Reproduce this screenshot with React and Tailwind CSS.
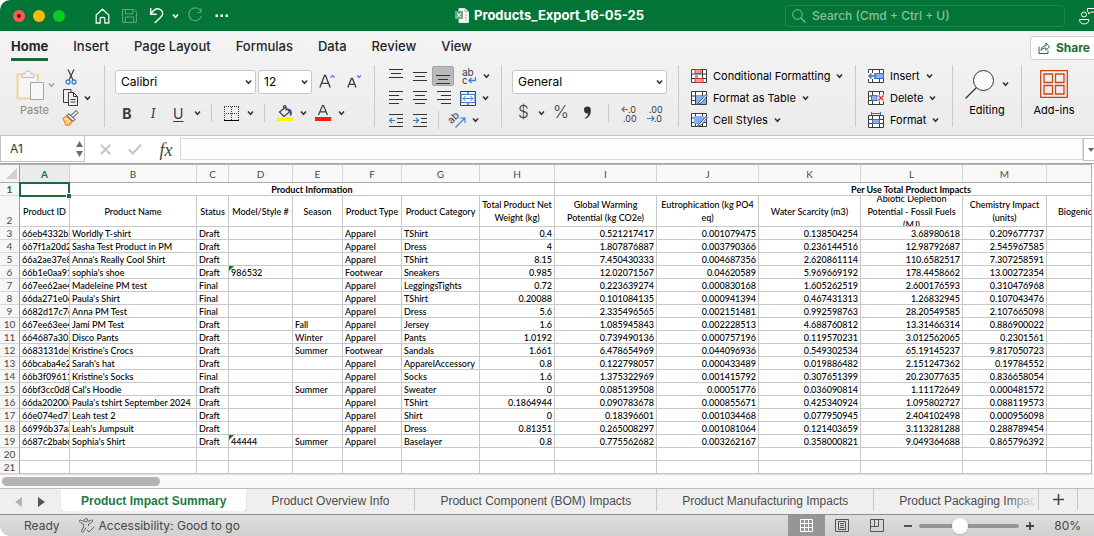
import React, { useState } from "react";
import clsx from "clsx";

const TABS = ["Home", "Insert", "Page Layout", "Formulas", "Data", "Review", "View"];

const COLUMNS = [
  { id: "A", width: "w-[50px]", label: "Product ID" },
  { id: "B", width: "w-[127px]", label: "Product Name" },
  { id: "C", width: "w-[32px]", label: "Status" },
  { id: "D", width: "w-[64px]", label: "Model/Style #" },
  { id: "E", width: "w-[50px]", label: "Season" },
  { id: "F", width: "w-[59px]", label: "Product Type" },
  { id: "G", width: "w-[78px]", label: "Product Category" },
  { id: "H", width: "w-[75px]", label: "Total Product Net Weight (kg)" },
  { id: "I", width: "w-[102px]", label: "Global Warming Potential (kg CO2e)" },
  { id: "J", width: "w-[102px]", label: "Eutrophication (kg PO4 eq)" },
  { id: "K", width: "w-[102px]", label: "Water Scarcity (m3)" },
  { id: "L", width: "w-[102px]", label: "Abiotic Depletion Potential - Fossil Fuels (MJ)" },
  { id: "M", width: "w-[84px]", label: "Chemistry Impact (units)" },
  { id: "", width: "w-[220px]", label: "Biogenic" },
];

const ROWS = [
  ["66eb4332b3", "Worldly T-shirt", "Draft", "", "", "Apparel", "TShirt", "0.4", "0.521217417", "0.001079475", "0.138504254", "3.68980618", "0.209677737"],
  ["667f1a20d2", "Sasha Test Product in PM", "Draft", "", "", "Apparel", "Dress", "4", "1.807876887", "0.003790366", "0.236144516", "12.98792687", "2.545967585"],
  ["66a2ae37e8", "Anna's Really Cool Shirt", "Draft", "", "", "Apparel", "TShirt", "8.15", "7.450430333", "0.004687356", "2.620861114", "110.6582517", "7.307258591"],
  ["66b1e0aa91", "sophia's shoe", "Draft", "986532", "", "Footwear", "Sneakers", "0.985", "12.02071567", "0.04620589", "5.969669192", "178.4458662", "13.00272354"],
  ["667ee62ae4", "Madeleine PM test", "Final", "", "", "Apparel", "LeggingsTights", "0.72", "0.223639274", "0.000830168", "1.605262519", "2.600176593", "0.310476968"],
  ["66da271e0c", "Paula's Shirt", "Final", "", "", "Apparel", "TShirt", "0.20088", "0.101084135", "0.000941394", "0.467431313", "1.26832945", "0.107043476"],
  ["6682d17c7c", "Anna PM Test", "Final", "", "", "Apparel", "Dress", "5.6", "2.335496565", "0.002151481", "0.992598763", "28.20549585", "2.107665098"],
  ["667ee63ee4", "Jami PM Test", "Draft", "", "Fall", "Apparel", "Jersey", "1.6", "1.085945843", "0.002228513", "4.688760812", "13.31466314", "0.886900022"],
  ["664687a305", "Disco Pants", "Draft", "", "Winter", "Apparel", "Pants", "1.0192", "0.739490136", "0.000757196", "0.119570231", "3.012562065", "0.2301561"],
  ["6683131deb", "Kristine's Crocs", "Draft", "", "Summer", "Footwear", "Sandals", "1.661", "6.478654969", "0.044096936", "0.549302534", "65.19145237", "9.817050723"],
  ["66bcaba4e2", "Sarah's hat", "Draft", "", "", "Apparel", "ApparelAccessory", "0.8", "0.122798057", "0.000433489", "0.019886482", "2.151247362", "0.19784552"],
  ["66b3f09611", "Kristine's Socks", "Final", "", "", "Apparel", "Socks", "1.6", "1.375322969", "0.001415792", "0.307651399", "20.23077635", "0.836658054"],
  ["66bf3cc0d8", "Cal's Hoodie", "Draft", "", "Summer", "Apparel", "Sweater", "0", "0.085139508", "0.00051776", "0.036090814", "1.11172649", "0.000481572"],
  ["66da20200c", "Paula's tshirt September 2024", "Draft", "", "", "Apparel", "TShirt", "0.1864944", "0.090783678", "0.000855671", "0.425340924", "1.095802727", "0.088119573"],
  ["66e074ed75", "Leah test 2", "Draft", "", "", "Apparel", "Shirt", "0", "0.18396601", "0.001034468", "0.077950945", "2.404102498", "0.000956098"],
  ["66996b37aa", "Leah's Jumpsuit", "Draft", "", "", "Apparel", "Dress", "0.81351", "0.265008297", "0.001081064", "0.121403659", "3.113281288", "0.288789454"],
  ["6687c2bab6", "Sophia's Shirt", "Draft", "44444", "Summer", "Apparel", "Baselayer", "0.8", "0.775562682", "0.003262167", "0.358000821", "9.049364688", "0.865796392"],
  [],
  [],
];

const SHEETS = [
  "Product Impact Summary",
  "Product Overview Info",
  "Product Component (BOM) Impacts",
  "Product Manufacturing Impacts",
  "Product Packaging Impacts",
];

function Icon({ w = 16, h = 16, children, className }) {
  return (
    <svg width={w} height={h} viewBox={`0 0 ${w} ${h}`} fill="none" stroke="#3b3b3b" strokeWidth="1" className={clsx("shrink-0 overflow-visible", className)} aria-hidden="true">
      {children}
    </svg>
  );
}

function Chevron({ className, stroke = "#333" }) {
  return (
    <Icon w={7} h={6} className={className}>
      <path d="M1 1.5 3.5 4.2 6 1.5" stroke={stroke} strokeWidth="1.6" />
    </Icon>
  );
}

function IconButton({ label, className, children }) {
  return (
    <button type="button" aria-label={label} className={clsx("flex shrink-0 items-center justify-center", className)}>
      {children}
    </button>
  );
}

function Separator({ className = "h-[62px]" }) {
  return <span className={clsx("w-px shrink-0 bg-[#c9c9c9]", className)} />;
}

function RibbonSelect({ label, value, className }) {
  return (
    <div className={clsx("relative flex items-center", className)}>
      <select aria-label={label} defaultValue={value} className="h-6 w-full appearance-none rounded-[3px] border border-[#c8c8c8] bg-white pl-[5px] text-[12px] text-black">
        <option>{value}</option>
      </select>
      <Chevron className="pointer-events-none absolute right-1" />
    </div>
  );
}

function TitleBar() {
  return (
    <header className="flex h-[31px] shrink-0 items-center bg-[#037536] text-white">
      <div className="flex items-center gap-2 pl-[13px]">
        <IconButton label="Close" className="h-3 w-3 rounded-full bg-[#fb5b50]">
          <span className="h-1 w-1 rounded-full bg-[#6d0a05]" />
        </IconButton>
        <IconButton label="Minimize" className="h-3 w-3 rounded-full bg-[#f8bc05]" />
        <IconButton label="Zoom window" className="h-3 w-3 rounded-full bg-[#0acb21]" />
      </div>
      <div className="ml-[30px] flex items-center gap-3">
        <IconButton label="Home">
          <Icon w={15} h={16}>
            <path d="M1.2 7 7.5 1.2 13.8 7v8H9.8v-4.5a1 1 0 0 0-1-1H6.2a1 1 0 0 0-1 1V15h-4z" stroke="#e9f4ed" strokeWidth="1.3" />
          </Icon>
        </IconButton>
        <IconButton label="Save">
          <Icon w={15} h={16}>
            <path d="M.6 1.5h11.3l2.5 2.5v10.4H.6zM3.5 1.5v4.3h7.4V1.5M3.3 14.4V9h8.4v5.4" stroke="#62a983" />
          </Icon>
        </IconButton>
        <div className="flex items-center gap-2">
          <IconButton label="Undo">
            <Icon w={15} h={17}>
              <path d="M1.7 1v6.2h6M1.9 7C4 3.6 7.5.8 11 2.300c3.500 1.800 3.300 5.400 1 7.700L5.800 16" stroke="#fff" strokeWidth="1.4" />
            </Icon>
          </IconButton>
          <IconButton label="Undo history"><Chevron stroke="#fff" /></IconButton>
        </div>
        <IconButton label="Redo" className="-ml-1">
          <Icon w={16} h={16}>
            <path d="M14 3.5A6.4 6.4 0 1 0 14.400 8M14 .5v4h-4" stroke="#57a37a" strokeWidth="1.2" />
          </Icon>
        </IconButton>
        <IconButton label="More commands">
          <Icon w={13} h={4}>
            <path d="M.5.500H3V3H.5zM5.500.5H8V3H5.500zM10.500.5H13V3h-2.500z" fill="#fff" stroke="none" />
          </Icon>
        </IconButton>
      </div>
      <div className="ml-[227px] flex flex-1 items-center gap-[5px]">
        <Icon w={14} h={15}>
          <path d="M4 .5h6L13.500 4v10.500H4z" fill="#fff" stroke="#d9eadf" />
          <path d="M10 .5V4h3.500M10 7h2M10 9.500h2M10 12h2" stroke="#8bb99d" />
          <path d="M0 3h8v8H0z" fill="#6ba583" stroke="none" />
          <path d="m2 5 4 4.500M6 5 2 9.500" stroke="#fff" />
        </Icon>
        <h1 className="whitespace-nowrap text-[13px] font-bold">Products_Export_16-05-25</h1>
      </div>
      <label className="flex h-[22px] w-[280px] items-center gap-[6px] rounded-[4px] border border-[#218653] px-[6px]">
        <Icon w={14} h={14}>
          <circle cx="5.500" cy="5.500" r="4.800" stroke="#8ac0a0" />
          <path d="m9 9 4.500 4.500" stroke="#8ac0a0" strokeWidth="1.300" />
        </Icon>
        <input aria-label="Search" placeholder="Search (Cmd + Ctrl + U)" className="w-full bg-transparent text-[12px] font-medium text-white outline-none placeholder:text-[#8ac0a0]" />
      </label>
      <IconButton label="Collaborators" className="ml-[14px]">
        <Icon w={15} h={18}>
          <circle cx="5" cy="7.500" r="2.500" stroke="#fff" />
          <path d="M.6 12.500h9.300c.3 2.500-1.700 4.500-4.600 4.500S.3 15 .6 12.500zM8.500 4.500v-3H15M8.500 4.500l1 .8.300 1.700 2-2H15" stroke="#fff" />
        </Icon>
      </IconButton>
    </header>
  );
}

function RibbonTabs({ active, onSelect }) {
  return (
    <nav className="flex h-[33px] items-center">
      <div className="flex flex-1 gap-[25px] pl-[11px]">
        {TABS.map((tab) => (
          <button
            key={tab}
            type="button"
            onClick={() => onSelect(tab)}
            className={clsx(
              "border-b-[3px] pt-[2px] pb-[3px] text-[13px] leading-[18px] whitespace-nowrap text-[#262626]",
              tab === active ? "border-[#18683a] font-bold" : "border-transparent font-medium"
            )}
          >
            {tab}
          </button>
        ))}
      </div>
      <button type="button" className="flex h-6 items-center gap-[6px] rounded-l-[4px] border border-r-0 border-[#cfcfcf] bg-white pr-1 pl-[7px] text-[12px] font-bold text-[#1c6b3c]">
        <Icon w={12} h={12}>
          <path d="M1 4.500v7h9V8.500M3 8.500c.3-3 2-4.800 5-4.800V1l3.500 3.800L8 8.300V6c-2.500 0-4 .7-5 2.500z" stroke="#1c6b3c" />
        </Icon>
        Share
      </button>
    </nav>
  );
}

function ClipboardGroup() {
  return (
    <div className="flex w-[104px] shrink-0 pl-4">
      <div className="flex w-[46px] flex-col items-start pt-[5px]">
        <div className="flex items-center gap-1">
          <Icon w={28} h={30}>
            <path d="M7 4.500H1.500v24H14M20 4.500h2V11" stroke="#efd49d" strokeWidth="2" />
            <path d="M3 6h17v21H3z" fill="#f7f5f1" stroke="none" />
            <path d="M6 7.500V4h3c.5-4 5.500-4 6 0h3v3.500z" fill="#f4f4f4" stroke="#b9b9b9" />
            <path d="M14.500 12.500h13v17h-13z" fill="#f7f7f7" stroke="#a5a5a5" />
          </Icon>
          <Chevron stroke="#a9a9a9" />
        </div>
        <button type="button" className="ml-1 pt-[2px] text-[11px] leading-4 text-[#858585]">Paste</button>
      </div>
      <div className="flex flex-col items-start gap-1 pt-[3px]">
        <IconButton label="Cut" className="h-[17px] w-[18px]">
          <Icon w={12} h={16}>
            <path d="M3 .5 8 11M9 .5 4 11" strokeWidth="1.200" />
            <circle cx="3" cy="13" r="2" stroke="#3f7fd0" strokeWidth="1.300" />
            <circle cx="9" cy="13" r="2" stroke="#3f7fd0" strokeWidth="1.300" />
          </Icon>
        </IconButton>
        <div className="flex items-center gap-[5px]">
          <IconButton label="Copy">
            <Icon w={17} h={17}>
              <path d="M9 3.500V.5H1.500v13H6M6.500 3.500h5l4 4v9h-9zM11.500 3.500v4h4M8.500 10.500h5M8.500 13h5" />
            </Icon>
          </IconButton>
          <Chevron />
        </div>
        <IconButton label="Format painter">
          <Icon w={17} h={16}>
            <path d="m1 8.500 3.500-2.300 5.500 5.300L7.500 15H4z" fill="#fbe0bd" stroke="#ec8f2f" strokeWidth="1.300" />
            <path d="m3 12 2-2M5 14l2-2" stroke="#ec8f2f" />
            <path d="m5 5.500 2-1.700 6 5.700-2 2zM9 5.500l5-5 2 2-5 5" fill="#eee" />
          </Icon>
        </IconButton>
      </div>
    </div>
  );
}

function FontGroup() {
  return (
    <div className="flex w-[269px] shrink-0 flex-col gap-2 pt-[5px] pl-[10px]">
      <div className="flex items-center gap-[2px]">
        <RibbonSelect label="Font" value="Calibri" className="w-[141px]" />
        <RibbonSelect label="Font size" value="12" className="w-[54px]" />
        <IconButton label="Increase font size" className="ml-[5px]">
          <Icon w={16} h={16}>
            <path d="M.8 13.500 5.500 1.500h1l4.700 12M2.400 9.300h7.200" strokeWidth="1.300" />
            <path d="m11.500 3.500 2-2 2 2" stroke="#3f7fd0" strokeWidth="1.200" />
          </Icon>
        </IconButton>
        <IconButton label="Decrease font size" className="ml-[10px]">
          <Icon w={16} h={16}>
            <path d="m.8 13.500 3.600-9h1l3.600 9M2 10.300h5.800" strokeWidth="1.300" />
            <path d="m10 1.500 2 2 2-2" stroke="#3f7fd0" strokeWidth="1.200" />
          </Icon>
        </IconButton>
      </div>
      <div className="flex h-[22px] items-center pl-[7px] text-[14px] text-[#3b3b3b]">
        <button type="button" className="w-[10px] font-bold">B</button>
        <button type="button" className="ml-4 w-[10px] font-serif italic">I</button>
        <button type="button" className="ml-[15px] w-[10px] underline underline-offset-2">U</button>
        <Chevron className="ml-[11px]" />
        <Separator className="ml-[10px] h-[18px]" />
        <IconButton label="Borders" className="ml-3">
          <Icon w={15} h={15}>
            <path d="M0 .5h15M.5 1v13M14.500 1v13M7.500 1v13M0 7.500h15" strokeDasharray="1 1" />
            <path d="M0 14.500h15" stroke="#000" />
          </Icon>
        </IconButton>
        <Chevron className="ml-2" />
        <Separator className="ml-[10px] h-[18px]" />
        <IconButton label="Fill color" className="ml-3">
          <Icon w={16} h={16}>
            <path d="m2.500 7 6-5 4 5-5.500 4.500zM6.500 4.500V2c0-2 2.500-2 2.500 0v3.500" strokeWidth="1.200" />
            <path d="M11 4.500c3 0 3.500 3 2.500 6" stroke="#3a4fa0" strokeWidth="2" />
            <path d="M0 12h16v4H0z" fill="#f7fb00" stroke="none" />
          </Icon>
        </IconButton>
        <Chevron className="ml-[7px]" />
        <IconButton label="Font color" className="ml-2">
          <Icon w={16} h={16}>
            <path d="M3.500 10 7.500.5h1l4 9.500M5 6.800h6" strokeWidth="1.200" />
            <path d="M0 12h16v4H0z" fill="#f8210b" stroke="none" />
          </Icon>
        </IconButton>
        <Chevron className="ml-[7px]" />
      </div>
    </div>
  );
}

function AlignIcon({ d }) {
  return (
    <Icon w={14} h={14}>
      <path d={d} stroke="#333" />
    </Icon>
  );
}

function AlignmentGroup() {
  return (
    <div className="flex w-[126px] shrink-0 flex-col gap-[2px] pt-px pl-[9px]">
      <div className="flex h-5 items-center">
        <IconButton label="Top align" className="w-6"><AlignIcon d="M0 .5h14M2 4.500h10M0 8.500h14" /></IconButton>
        <IconButton label="Middle align" className="w-6"><AlignIcon d="M0 3.500h14M2 7.500h10M0 11.500h14" /></IconButton>
        <IconButton label="Bottom align" className="h-5 w-[22px] rounded-[2px] border border-[#a5a5a5] bg-[#bababa]"><AlignIcon d="M0 6.500h14M2 10.500h10M0 14.500h14" /></IconButton>
        <IconButton label="Wrap text" className="ml-2">
          <Icon w={15} h={17}>
            <text x="0" y="8" fontSize="10" fill="#3b3b3b" stroke="none">ab</text>
            <text x="0" y="16" fontSize="10" fill="#3b3b3b" stroke="none">c</text>
            <path d="M13.500 9v3.500H7.500M9.500 10l-2.500 2.500 2.500 2.500" stroke="#3f7fd0" strokeWidth="1.300" />
          </Icon>
        </IconButton>
        <Chevron className="ml-[6px]" />
      </div>
      <div className="flex h-5 items-center">
        <IconButton label="Align left" className="w-6"><AlignIcon d="M0 .5h14M0 4.500h10M0 8.500h14M0 12.500h10" /></IconButton>
        <IconButton label="Center" className="w-6"><AlignIcon d="M0 .5h14M2 4.500h10M0 8.500h14M2 12.500h10" /></IconButton>
        <IconButton label="Align right" className="w-6"><AlignIcon d="M0 .5h14M4 4.500h10M0 8.500h14M4 12.500h10" /></IconButton>
        <IconButton label="Merge cells" className="ml-1">
          <Icon w={16} h={15}>
            <path d="M.5.500h15v14H.5zM8 .5v3M8 11v3.500" />
            <path d="M1 3.500h14v8H1z" fill="#fff" stroke="#3f7fd0" strokeWidth="1.200" />
            <path d="M3 7.500h10M5.500 5 3 7.500 5.500 10M10.500 5 13 7.500 10.500 10" stroke="#3f7fd0" />
          </Icon>
        </IconButton>
        <Chevron className="ml-[6px]" />
      </div>
      <div className="flex h-5 items-center">
        <IconButton label="Decrease indent" className="w-6">
          <Icon w={14} h={14}>
            <path d="M0 1.500h14M8 5.500h6M8 9.500h6M0 13.500h14" stroke="#333" />
            <path d="M6 7.500H0M3 5 .5 7.500 3 10" stroke="#3f7fd0" strokeWidth="1.200" />
          </Icon>
        </IconButton>
        <IconButton label="Increase indent" className="w-6">
          <Icon w={14} h={14}>
            <path d="M0 1.500h14M8 5.500h6M8 9.500h6M0 13.500h14" stroke="#333" />
            <path d="M0 7.500h6M3 5l2.500 2.500L3 10" stroke="#3f7fd0" strokeWidth="1.200" />
          </Icon>
        </IconButton>
        <Separator className="ml-[6px] h-[18px]" />
        <IconButton label="Orientation" className="ml-[10px]">
          <Icon w={18} h={16}>
            <text x="0" y="10" fontSize="10" fill="#3b3b3b" stroke="none" transform="rotate(-45 4 8)">ab</text>
            <path d="m6.500 15.500 9-9M11 6h5v5" stroke="#3f7fd0" strokeWidth="1.200" />
          </Icon>
        </IconButton>
        <Chevron className="ml-[5px]" />
      </div>
    </div>
  );
}

function NumberGroup() {
  return (
    <div className="flex w-[176px] shrink-0 flex-col gap-2 pt-[5px] pl-[10px]">
      <RibbonSelect label="Number format" value="General" className="w-[155px]" />
      <div className="flex h-[22px] items-center pl-[6px] text-[17px] text-[#3b3b3b]">
        <button type="button" aria-label="Currency" className="w-[10px] font-light">$</button>
        <Chevron className="ml-[10px]" />
        <button type="button" aria-label="Percent" className="ml-2 w-4 font-light">%</button>
        <IconButton label="Comma style" className="ml-[14px]">
          <Icon w={9} h={14}>
            <path d="M1 4a3.300 3.300 0 0 1 6.800 0C8 8 6 11.500 2.200 12.800l-.5-.8C4 10.800 5 9.300 5 7.300 3 8 1 6.500 1 4z" fill="#333" stroke="none" />
          </Icon>
        </IconButton>
        <Separator className="ml-4 h-[18px]" />
        <IconButton label="Increase decimal" className="ml-3">
          <Icon w={17} h={17}>
            <path d="M7 4.500H1M3.500 2 1 4.500 3.500 7" stroke="#3f7fd0" strokeWidth="1.200" />
            <text x="7" y="8" fontSize="9" fill="#3b3b3b" stroke="none">.0</text>
            <text x="2" y="17" fontSize="9" fill="#3b3b3b" stroke="none">.00</text>
          </Icon>
        </IconButton>
        <IconButton label="Decrease decimal" className="ml-[9px]">
          <Icon w={17} h={17}>
            <text x="2" y="8" fontSize="9" fill="#3b3b3b" stroke="none">.00</text>
            <text x="7" y="17" fontSize="9" fill="#3b3b3b" stroke="none">.0</text>
            <path d="M0 13.500h7M4.500 11 7 13.500 4.500 16" stroke="#3f7fd0" strokeWidth="1.200" />
          </Icon>
        </IconButton>
      </div>
    </div>
  );
}

function MenuButton({ icon, children }) {
  return (
    <button type="button" className="flex h-[22px] items-center gap-[6px] text-[11px] whitespace-nowrap text-black">
      {icon}
      {children}
      <Chevron />
    </button>
  );
}

const GRID = "M.5.500h15v13H.5zM.5 5h15M.5 9.500h15M4.500.5v13M11.500.5v13";

function StylesGroup() {
  return (
    <div className="flex w-[176px] shrink-0 flex-col pl-3">
      <MenuButton icon={
        <Icon w={16} h={14}>
          <path d={GRID} fill="#fff" />
          <path d="M4 .5h6v4H4zM4 9.500h8v4H4z" fill="#f59a94" stroke="#d7342a" />
          <path d="M4 5h3v4H4z" fill="#7ea9e6" stroke="none" />
        </Icon>
      }>Conditional Formatting</MenuButton>
      <MenuButton icon={
        <Icon w={16} h={14}>
          <path d={GRID} fill="#fff" />
          <path d="M5 5h10v8H5z" fill="#86b0ec" stroke="none" />
          <path d="M15.500 3 9 10l-3 3.500 4-1.500 6-7z" fill="#fff" stroke="#345a8f" />
        </Icon>
      }>Format as Table</MenuButton>
      <MenuButton icon={
        <Icon w={16} h={14}>
          <path d={GRID} fill="#fff" />
          <path d="M3 3h10v8H3z" fill="#86b0ec" stroke="none" />
          <path d="M15.500 3 9 10l-3 3.500 4-1.500 6-7z" fill="#fff" stroke="#345a8f" />
        </Icon>
      }>Cell Styles</MenuButton>
    </div>
  );
}

function CellsGroup() {
  return (
    <div className="flex w-[96px] shrink-0 flex-col pl-3">
      <MenuButton icon={
        <Icon w={16} h={14}>
          <path d={GRID} fill="#fff" />
          <path d="M7 4.500h8.500v5H7z" fill="#86b0ec" stroke="#3b6fc0" />
          <path d="M0 4h6v6H0z" fill="#f2f2f2" stroke="none" />
          <path d="M8 7H1M3.500 4.500 1 7l2.500 2.500" stroke="#2f6fd0" strokeWidth="1.300" />
        </Icon>
      }>Insert</MenuButton>
      <MenuButton icon={
        <Icon w={16} h={14}>
          <path d={GRID} fill="#fff" />
          <path d="M3.500 4.500H9v5H3.500z" fill="#86b0ec" stroke="#3b6fc0" />
          <path d="M9.500 3.500H17v7H9.500z" fill="#f0f0f0" stroke="none" />
          <path d="m10.500 4.500 5 5M15.500 4.500l-5 5" stroke="#e0392e" strokeWidth="1.400" />
        </Icon>
      }>Delete</MenuButton>
      <MenuButton icon={
        <Icon w={16} h={16}>
          <path d="M.5 3.500h15v12H.5zM.5 7.500h15M.5 11.500h15M4.500 3.500v12M11.500 3.500v12" fill="#fff" />
          <path d="M4.500 7.500h7v4h-7z" fill="#86b0ec" stroke="#3b6fc0" />
          <path d="M3.500 0v3M12.500 0v3M3.500 1.500h9" stroke="#2f6fd0" />
        </Icon>
      }>Format</MenuButton>
    </div>
  );
}

function Ribbon() {
  const [active, setActive] = useState("Home");
  return (
    <section className="shrink-0 border-b border-[#c3c3c3] bg-gradient-to-b from-[#f4f4f4] to-[#ebebeb] pb-1">
      <RibbonTabs active={active} onSelect={setActive} />
      <div className="flex items-start pt-px">
        <ClipboardGroup />
        <Separator />
        <FontGroup />
        <Separator />
        <AlignmentGroup />
        <Separator />
        <NumberGroup />
        <Separator />
        <StylesGroup />
        <Separator />
        <CellsGroup />
        <Separator />
        <button type="button" className="flex w-[68px] shrink-0 flex-col items-center pt-[3px] text-[11px] leading-4 text-black">
          <span className="flex items-center gap-[6px]">
            <Icon w={31} h={32}>
              <circle cx="18.500" cy="12.500" r="10" fill="#fafafa" stroke="#333" />
              <path d="M11.500 19.500.500 30.500" stroke="#333" strokeWidth="1.300" />
            </Icon>
            <Chevron />
          </span>
          <span className="pt-[2px]">Editing</span>
        </button>
        <Separator />
        <button type="button" className="flex w-[64px] shrink-0 flex-col items-center gap-1 pt-[5px] text-[11px] leading-4 text-black">
          <Icon w={28} h={28}>
            <path d="M.7.7h26.600v26.600H.7zM4 4h8.500v8.500H4zM15.500 4H24v8.500h-8.500zM4 15.500h8.500V24H4zM15.500 15.500H24V24h-8.500z" stroke="#cc4515" strokeWidth="1.300" />
          </Icon>
          Add-ins
        </button>
      </div>
    </section>
  );
}

function FormulaBar() {
  return (
    <section className="flex h-7 shrink-0 border-b border-[#a5a5a5] bg-white">
      <div className="flex h-[26px] w-[85px] shrink-0 items-center justify-between border border-[#c3c3c3] border-t-0 pr-px">
        <input aria-label="Name box" defaultValue="A1" className="w-[60px] bg-transparent pl-[9px] text-[12px] text-[#333] outline-none" />
        <Icon w={7} h={16}>
          <path d="M3.500 0 7 6H0zM3.500 16 7 10H0z" fill="#6e6e6e" stroke="none" />
        </Icon>
      </div>
      <div className="flex shrink-0 items-center pl-[15px]">
        <IconButton label="Cancel">
          <Icon w={11} h={11}><path d="m.8.8 9.400 9.400M10.200.8.800 10.200" stroke="#c6c6c6" strokeWidth="2" /></Icon>
        </IconButton>
        <IconButton label="Enter" className="ml-[17px]">
          <Icon w={14} h={11}><path d="m.8 5.500 4 4L13 .8" stroke="#c6c6c6" strokeWidth="2" /></Icon>
        </IconButton>
        <button type="button" aria-label="Insert function" className="ml-[14px] w-5 font-['Liberation_Serif',serif] text-[18px] leading-5 text-[#444] italic">fx</button>
      </div>
      <input aria-label="Formula" className="my-[2px] ml-1 h-[22px] min-w-0 flex-1 border border-[#d9d9d9] bg-[#fdfdfd] px-1 text-[12px] outline-none" />
      <IconButton label="Expand formula bar" className="my-[2px] w-[11px] border border-r-0 border-[#c3c3c3] pl-1">
        <Icon w={6} h={4}><path d="M0 0h6L3 4z" fill="#666" stroke="none" /></Icon>
      </IconButton>
    </section>
  );
}

function DataRow({ row, number }) {
  return (
    <tr className="h-[13px]">
      <RowHeader number={number} />
      {COLUMNS.map((col, i) => (
        <td
          key={i}
          className={clsx(
            "relative overflow-hidden border-r border-b border-[#c8c8c8] pt-[2px] leading-[10px] whitespace-nowrap",
            i >= 7 ? "pr-[2px] text-right" : "pl-[2px]"
          )}
        >
          {i === 3 && row[i] && <span className="absolute top-0 left-0 border-t-[5px] border-r-[5px] border-t-[#0d8016] border-r-transparent" />}
          {row[i]}
        </td>
      ))}
    </tr>
  );
}

function RowHeader({ number, selected }) {
  return (
    <th
      scope="row"
      className={clsx(
        "border-r border-b border-r-[#9c9c9c] border-b-[#d6d6d6] bg-[#f6f6f6] text-center align-bottom text-[10px] leading-3",
        selected ? "font-bold text-[#1f6f3f]" : "font-normal text-[#4a4a4a]"
      )}
    >
      {number}
    </th>
  );
}

function Sheet() {
  return (
    <main className="mr-[2px] overflow-hidden border-t border-r border-[#b3b3b3] bg-white">
      <table className="w-[1267px] table-fixed border-separate border-spacing-0 font-['Lato',sans-serif] text-[9px] font-medium text-black">
        <colgroup>
          <col className="w-5" />
          {COLUMNS.map((col, i) => <col key={i} className={col.width} />)}
        </colgroup>
        <thead>
          <tr className="h-[18px]">
            <td className="border-r border-b border-r-[#9c9c9c] border-b-[#ababab] bg-[#f6f6f6] pl-[6px]">
              <Icon w={11} h={11}><path d="M11 0v11H0z" fill="#d0d0d0" stroke="none" /></Icon>
            </td>
            {COLUMNS.map((col, i) => (
              <th
                key={i}
                scope="col"
                className={clsx(
                  "border-r border-b border-r-[#d3d3d3] border-b-[#ababab] text-[10px] leading-4",
                  i === 0 ? "bg-[#ebebeb] font-bold text-[#1f6f3f]" : "bg-[#f8f8f8] font-normal text-[#4a4a4a]"
                )}
              >
                {col.id}
              </th>
            ))}
          </tr>
        </thead>
        <tbody>
          <tr className="h-[13px]">
            <RowHeader number={1} selected />
            <td className="relative border-r border-b border-[#c8c8c8]">
              <span className="absolute -inset-x-px -top-px -bottom-[2px] border-2 border-[#1c6b3a]" />
              <span className="absolute -right-[2px] -bottom-[3px] h-[5px] w-[5px] border-t border-l border-white bg-[#1c6b3a]" />
            </td>
            <td colSpan={7} className="border-r border-b border-[#c8c8c8] pt-[2px] text-center leading-[10px] font-bold">Product Information</td>
            <td colSpan={6} className="border-b border-[#c8c8c8] pt-[2px] text-center leading-[10px] font-bold">Per Use Total Product Impacts</td>
          </tr>
          <tr className="h-[31px]">
            <RowHeader number={2} />
            {COLUMNS.map((col, i) => (
              <td key={i} className={clsx("border-r border-b border-[#c8c8c8] p-0", i === 13 ? "pl-[11px]" : "text-center")}>
                <div className="flex h-[30px] flex-col justify-center overflow-hidden leading-[13px]">
                  <span className={i === 11 ? "px-[2px]" : "px-0"}>{col.label}</span>
                </div>
              </td>
            ))}
          </tr>
          {ROWS.map((row, i) => <DataRow key={i} row={row} number={i + 3} />)}
        </tbody>
      </table>
    </main>
  );
}

function SheetTabs() {
  const [active, setActive] = useState(SHEETS[0]);
  return (
    <nav className="flex h-[27px] shrink-0 items-start border-t border-b border-t-[#bdbdbd] border-b-[#8f8f8f] bg-[#efefef] font-['Liberation_Sans',sans-serif] text-[12px] text-[#4c4c4c]">
      <div className="flex h-[25px] w-[61px] shrink-0 items-center gap-4 pl-[15px]">
        <IconButton label="Previous sheet"><Icon w={7} h={10}><path d="M7 0v10L0 5z" fill="#b3b3b3" stroke="none" /></Icon></IconButton>
        <IconButton label="Next sheet"><Icon w={7} h={10}><path d="M0 0v10l7-5z" fill="#555" stroke="none" /></Icon></IconButton>
      </div>
      <div className="flex min-w-0 flex-1 overflow-hidden">
        {SHEETS.map((name) => (
          <button
            key={name}
            type="button"
            onClick={() => setActive(name)}
            className={clsx(
              "h-[22px] shrink-0 pt-px whitespace-nowrap",
              name === active ? "rounded-b-[2px] bg-white px-5 font-bold text-[#217a43] shadow-[0_1px_1px_#999]" : "border-r border-[#c6c6c6] px-[25px]"
            )}
          >
            {name}
          </button>
        ))}
      </div>
      <div className="z-10 -ml-8 h-[22px] w-8 shrink-0 bg-gradient-to-r from-transparent to-[#efefef]" />
      <IconButton label="Add sheet" className="mr-4 h-[21px] w-10 border-x border-[#c6c6c6]">
        <Icon w={11} h={11}><path d="M5.500 0v11M0 5.500h11" stroke="#444" strokeWidth="1.600" /></Icon>
      </IconButton>
    </nav>
  );
}

function StatusBar() {
  return (
    <footer className="flex h-[21px] shrink-0 items-center bg-gradient-to-b from-[#dedede] to-[#d0d0d0] text-[12px] text-[#474747]">
      <span className="pl-6">Ready</span>
      <button type="button" className="ml-[19px] flex items-center gap-1">
        <Icon w={16} h={15}>
          <circle cx="7" cy="2.200" r="1.700" stroke="#666" />
          <path d="M5 3.500 1.500 2C0 2 0 4 1.500 4.500L4.500 6v3L2.500 13c0 1.500 1.500 1.800 2 .8L7 9.500M9 3.500 12.500 2c1.500 0 1.500 2 0 2.500L9.500 6v2M8 12l2 2 5.500-5.500" stroke="#666" />
        </Icon>
        Accessibility: Good to go
      </button>
      <div className="ml-auto flex h-full items-center">
        <IconButton label="Normal view" className="h-full w-[37px] bg-[#969696]">
          <Icon w={13} h={13}><path d="M.5.500h12v12H.5zM.5 4.500h12M.5 8.500h12M4.500.5v12M8.500.5v12" stroke="#fff" /></Icon>
        </IconButton>
        <IconButton label="Page layout view" className="ml-[10px]">
          <Icon w={14} h={13}><path d="M.5.500h13v12H.5zM3.500 2.500h7v8h-7zM5 4.500h4M5 6.500h4M5 8.500h4" stroke="#555" /></Icon>
        </IconButton>
        <IconButton label="Page break view" className="ml-[21px]">
          <Icon w={14} h={13}><path d="M.5.500h13v12H.5zM.5 7.500h8M8.500.5v7M4.500.5v7" stroke="#555" /></Icon>
        </IconButton>
        <IconButton label="Zoom out" className="ml-5">
          <Icon w={8} h={8}><path d="M0 4h8" stroke="#444" strokeWidth="1.800" /></Icon>
        </IconButton>
        <input
          type="range"
          aria-label="Zoom"
          defaultValue="39"
          className="mx-[7px] h-1 w-[100px] appearance-none rounded-full bg-[#959595] [&::-webkit-slider-thumb]:h-4 [&::-webkit-slider-thumb]:w-4 [&::-webkit-slider-thumb]:appearance-none [&::-webkit-slider-thumb]:rounded-full [&::-webkit-slider-thumb]:bg-white [&::-webkit-slider-thumb]:shadow"
        />
        <IconButton label="Zoom in">
          <Icon w={8} h={8}><path d="M0 4h8M4 0v8" stroke="#444" strokeWidth="1.800" /></Icon>
        </IconButton>
        <span className="ml-5 pr-[13px]">80%</span>
      </div>
    </footer>
  );
}

export default function App() {
  return (
    <div className="flex flex-col overflow-hidden rounded-l-[10px] bg-white font-['Inter',sans-serif]">
      <TitleBar />
      <Ribbon />
      <FormulaBar />
      <Sheet />
      {/* Horizontal scroll track */}
      <div className="flex h-[14px] shrink-0 items-center border-t border-[#dcdcdc] bg-[#fafafa] pl-[2px]">
        <div className="h-[9px] w-[158px] rounded-full bg-[#b4b4b4]" />
      </div>
      <SheetTabs />
      <StatusBar />
    </div>
  );
}
